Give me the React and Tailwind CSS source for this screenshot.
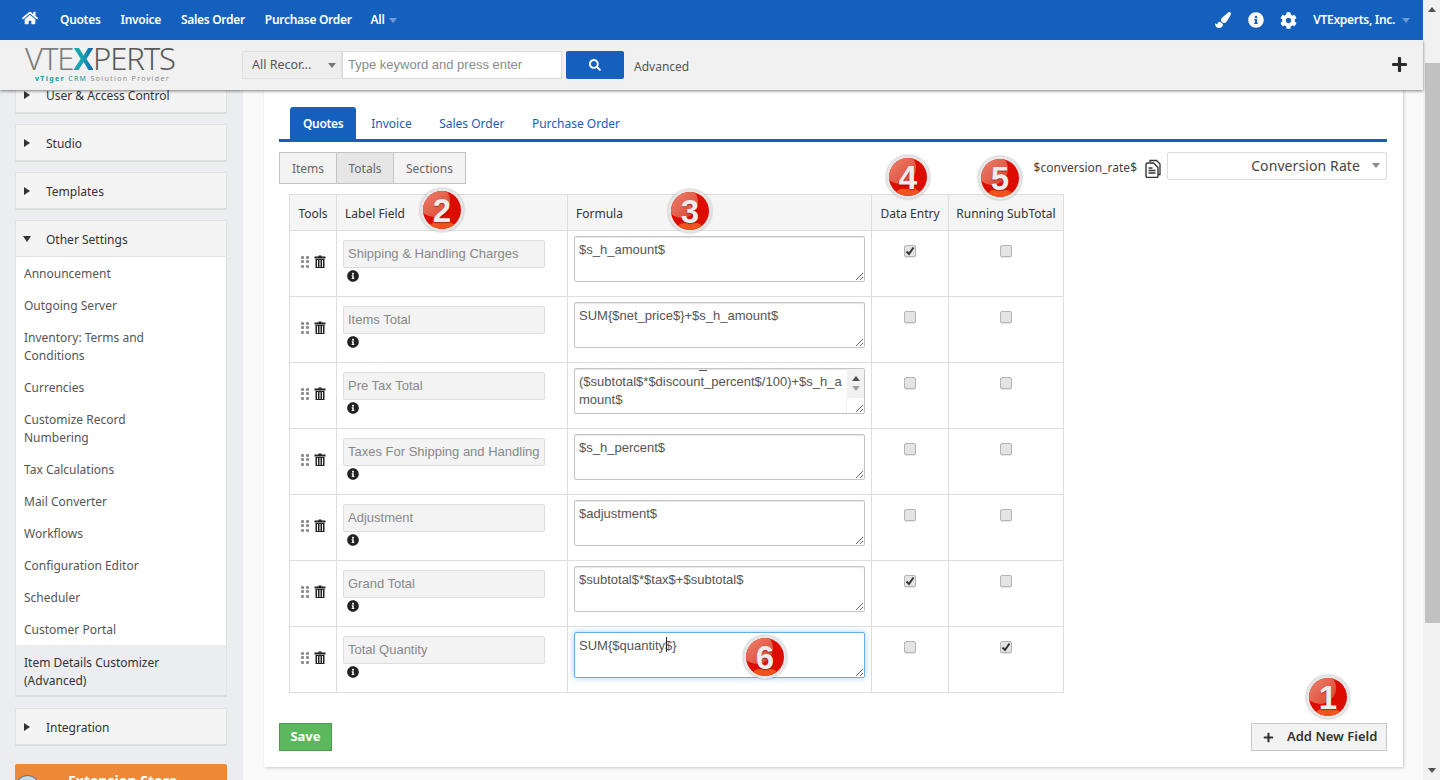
import { FaHome, FaPaintBrush, FaInfoCircle, FaCog, FaSearch, FaPlus } from "react-icons/fa";

const topLinks = ["Quotes", "Invoice", "Sales Order", "Purchase Order"];
const tabs = ["Quotes", "Invoice", "Sales Order", "Purchase Order"];

const rows = [
  { label: "Shipping & Handling Charges", formula: "$s_h_amount$", entry: true, running: false },
  { label: "Items Total", formula: "SUM{$net_price$}+$s_h_amount$", entry: false, running: false },
  { label: "Pre Tax Total", formula: "($subtotal$*$discount_percent$/100)+$s_h_amount$", entry: false, running: false, scroll: true },
  { label: "Taxes For Shipping and Handling", formula: "$s_h_percent$", entry: false, running: false },
  { label: "Adjustment", formula: "$adjustment$", entry: false, running: false },
  { label: "Grand Total", formula: "$subtotal$*$tax$+$subtotal$", entry: true, running: false },
  { label: "Total Quantity", formula: "SUM{$quantity$}", entry: false, running: true, focus: true },
];

// menu items under Other Settings
const settings = [
  "Announcement",
  "Outgoing Server",
  "Inventory: Terms and Conditions",
  "Currencies",
  "Customize Record Numbering",
  "Tax Calculations",
  "Mail Converter",
  "Workflows",
  "Configuration Editor",
  "Scheduler",
  "Customer Portal",
];

const badges = [
  { n: "1", pos: "left-[1306px] top-[675px]" },
  { n: "2", pos: "left-[420px] top-[188px]" },
  { n: "3", pos: "left-[668px] top-[189px]" },
  { n: "4", pos: "left-[886px] top-[155px]" },
  { n: "5", pos: "left-[978px] top-[156px]" },
  { n: "6", pos: "left-[743px] top-[635px]" },
];

const Caret = ({ className }) => (
  <span className={`inline-block w-0 h-0 border-x-[4px] border-x-transparent border-t-[5px] ${className}`}></span>
);

const Side = ({ className }) => (
  <span className={`inline-block w-0 h-0 border-y-[4px] border-y-transparent border-l-[6px] border-l-[#333] ${className}`}></span>
);

const Panel = ({ title }) => (
  <div className="h-[38px] bg-[#f4f4f4] border border-[#e2e2e2] border-b-[2px] border-b-[#dcdcdc] flex items-center pl-[8px]">
    <Side />
    <span className="ml-[16px] mt-[2px] text-[12px] text-[#333]">{title}</span>
  </div>
);

const Badge = ({ n, pos }) => (
  <div className={`absolute ${pos} z-20 w-[44px] h-[44px] rounded-full p-[3px] bg-[#e6e6e6] shadow-[0_0_2px_rgba(0,0,0,0.35)]`}>
    <div className="relative w-full h-full rounded-full overflow-hidden bg-[#dc0d00] flex items-center justify-center">
      <div className="absolute -left-[5px] -top-[6px] w-[32px] h-[32px] rounded-full bg-linear-to-br from-[#ec8f7c] to-[#dc3a28]"></div>
      <div className="absolute left-[6px] right-[6px] -bottom-[7px] h-[14px] rounded-full bg-[#f0541e]"></div>
      <span className="relative font-[Arial,sans-serif] font-bold text-[33px] leading-none text-[#ececec] [text-shadow:0_1px_1px_rgba(90,0,0,0.5)]">{n}</span>
    </div>
  </div>
);

const Check = ({ on }) => (
  <span className="relative inline-block w-[12px] h-[12px] rounded-[2px] border border-[#b5b5b5] bg-[#e4e4e4] shadow-[0_1px_1px_rgba(0,0,0,0.1)]">
    {on && (
      <svg viewBox="0 0 12 12" className="absolute -left-px -top-px w-[12px] h-[12px]">
        <path d="M2.5 6.5 L5 9 L9.5 2.5" fill="none" stroke="#333" strokeWidth="2" />
      </svg>
    )}
  </span>
);

const Grip = () => (
  <span className="grid grid-cols-2 gap-x-[2px] gap-y-[1.5px] w-[8px]">
    {[0, 1, 2, 3, 4, 5].map((i) => (
      <span key={i} className="w-[3px] h-[3px] rounded-[1px] bg-[#8c8c8c]"></span>
    ))}
  </span>
);

const Trash = () => (
  <svg viewBox="0 0 12 13" className="w-[12px] h-[13px]">
    <path d="M4.5 0.5h3v1h4v2H0.5v-2h4z" fill="#222" />
    <path d="M1.5 4h9v9h-9z" fill="#222" />
    <path d="M3.5 5v7M6 5v7M8.5 5v7" stroke="#fff" strokeWidth="1" />
  </svg>
);

const DocIcon = () => (
  <svg viewBox="0 0 16 19" className="w-[16px] h-[19px]">
    <path d="M5 3V1.5h6.5L15 5v10.5h-2" fill="none" stroke="#333" strokeWidth="1.3" />
    <path d="M1 5.5a1.500 1.500 0 0 1 1.500-1.500h6L13 8.500v8.500a1.500 1.500 0 0 1-1.500 1.500h-9A1.500 1.500 0 0 1 1 17z" fill="#fff" stroke="#333" strokeWidth="1.4" />
    <path d="M3.500 9h4M3.500 11.500h7M3.500 14h7" stroke="#333" strokeWidth="1.4" />
  </svg>
);

const Formula = ({ row }) => (
  <div className="relative w-[291px] h-[46px]">
    <textarea
      readOnly
      value={row.formula}
      className={`block w-full h-full resize-y font-[Arial,sans-serif] text-[13px] leading-[18px] text-[#555] pl-[4px] pt-[4px] overflow-hidden rounded-[2px] outline-none border ${
        row.focus
          ? "border-[#66afe9] shadow-[0_0_6px_rgba(102,175,233,0.6)]"
          : "border-[#c4c4c4] shadow-[inset_0_1px_1px_rgba(0,0,0,0.1)]"
      } ${row.scroll ? "pr-[20px] break-all" : "pr-[5px]"}`}
    ></textarea>
    {row.scroll && (
      <>
        <span className="absolute left-[125px] top-[2px] w-[8px] h-px bg-[#555]"></span>
        <div className="absolute right-px top-px w-[17px] h-[28px] bg-[#f1f1f1] flex flex-col items-center justify-center gap-[5px]">
          <span className="w-0 h-0 border-x-[4px] border-x-transparent border-b-[5px] border-b-[#505050]"></span>
          <Caret className="border-t-[#a3a3a3]" />
        </div>
        <div className="absolute right-[18px] bottom-px w-px h-[16px] bg-[#eee]"></div>
        <div className="absolute right-[1px] top-[29px] w-[17px] h-px bg-[#eee]"></div>
      </>
    )}
    {row.focus && <span className="absolute left-[92px] top-[5px] w-px h-[15px] bg-[#222]"></span>}
  </div>
);

const App = () => {
  return (
    <div className="relative w-[1440px] h-[780px] overflow-hidden flex font-['Open_Sans',sans-serif]">
      <div className="w-[1423px] h-full flex flex-col">
        {/* top bar */}
        <div className="h-[40px] shrink-0 bg-[#1560bd] flex items-center pl-[22px] pr-[13px] text-white text-[12px] tracking-[-0.3px] font-semibold z-20">
          <FaHome className="w-[16px] h-[16px] -mt-[5px] mr-[22px]" />
          <div className="flex items-center gap-5">
            {topLinks.map((l) => (
              <span key={l}>{l}</span>
            ))}
            <span className="flex items-center gap-[4px] -ml-px">
              All <Caret className="border-t-[#6f9bd6]" />
            </span>
          </div>
          <div className="ml-auto flex items-center">
            <FaPaintBrush className="w-[16px] h-[16px] mr-[17px]" />
            <FaInfoCircle className="w-[16px] h-[16px] mr-[16px]" />
            <FaCog className="w-[17px] h-[17px] mr-[16px]" />
            <span>VTExperts, Inc.</span>
            <Caret className="border-t-[#6f9bd6] ml-[7px]" />
          </div>
        </div>

        {/* search bar */}
        <div className="relative h-[50px] shrink-0 bg-[#f1f1f1] shadow-[0_1px_3px_rgba(0,0,0,0.5)] z-10 flex items-center pl-[25px] pr-[15px]">
          <div className="w-[151px] -mt-[1px]">
            <div className="h-[25px] leading-[25px] text-[31px] font-light tracking-[-1.1px] text-[#7d7d7d] whitespace-nowrap">
              VTE<span className="font-bold bg-linear-to-r from-[#10b0b0] via-[#18a0b0] to-[#1565b5] bg-clip-text text-transparent">X</span>
              <span className="text-[#5a5a5a]">PERTS</span>
            </div>
            <div className="mt-[3px] ml-[10px] text-[7px] leading-[10px] tracking-[1.35px] text-[#8a8a8a] whitespace-nowrap">
              <span className="text-[#16999f] font-bold">vTiger</span> <span className="text-[#16999f]">CRM</span> Solution Provider
            </div>
          </div>
          <div className="ml-[66px] flex items-center">
            <div className="w-[100px] h-[28px] bg-[#eee] border border-[#e0e0e0] flex items-center pl-[9px] text-[12.5px] text-[#555]">
              All Recor...
              <Caret className="border-t-[#777] ml-auto mr-[5px]" />
            </div>
            <input
              readOnly
              placeholder="Type keyword and press enter"
              className="w-[220px] h-[28px] bg-white border border-[#d9d9d9] px-[5px] pb-[2px] font-[Arial,sans-serif] text-[13px] placeholder:text-[#8a8a8a] outline-none"
            />
            <div className="ml-[4px] w-[58px] h-[28px] rounded-[2px] bg-[#1560bd] flex items-center justify-center text-white">
              <FaSearch className="w-[12px] h-[12px]" />
            </div>
            <span className="ml-[10px] text-[12px] text-[#555] mt-[3px]">Advanced</span>
          </div>
          <FaPlus className="ml-auto w-[17px] h-[17px] text-[#2b2b2b] -mt-[2px]" />
        </div>

        <div className="flex-1 min-h-0 flex bg-[#fafafa]">
          {/* sidebar */}
          <aside className="w-[243px] shrink-0 bg-[#ecedf1] overflow-hidden pl-[15px] pr-[16px]">
            <div className="-mt-[14px] flex flex-col gap-[10px]">
              <Panel title="User & Access Control" />
              <Panel title="Studio" />
              <Panel title="Templates" />
              <div className="bg-white border border-[#e2e2e2] border-b-[2px] border-b-[#dcdcdc]">
                <div className="h-[36px] bg-[#f4f4f4] border-b border-[#e2e2e2] flex items-center pl-[7px]">
                  <Caret className="!border-t-[6px] border-t-[#333]" />
                  <span className="ml-[15px] mt-[2px] text-[12px] text-[#333]">Other Settings</span>
                </div>
                {settings.map((s) => (
                  <div key={s} className="px-[8px] pt-[8px] pb-[6px] text-[12px] leading-[18px] text-[#555] w-[170px]">
                    {s}
                  </div>
                ))}
                <div className="px-[8px] pt-[9px] pb-[5px] text-[12px] leading-[18px] text-[#333] bg-[#ecedf1]">
                  Item Details Customizer (Advanced)
                </div>
              </div>
              <div className="mt-px">
                <Panel title="Integration" />
              </div>
              <div className="mt-[8px] h-[60px] rounded-t-[2px] bg-[#ee8a37] relative pl-[53px] pt-[8px] text-[14px] leading-[18px] font-bold text-white">
                <span className="absolute left-0 top-[11px] w-[25px] h-[25px] rounded-full border border-[#4a6d8c] bg-[#cfd8de]"></span>
                Extension Store
              </div>
            </div>
          </aside>

          {/* content */}
          <main className="flex-1 min-w-0 pl-[21px] pr-[20px]">
            <div className="h-[677px] bg-white shadow-[1px_1px_3px_rgba(0,0,0,0.2)] pl-[15px] pr-[16px] pt-[17px]">
              <div className="flex items-end h-[35px] border-b-[3px] border-[#1560bd] pl-[11px] text-[12px] text-[#1560bd]">
                {tabs.map((t, i) => (
                  <span
                    key={t}
                    className={`h-[32px] pt-[2px] flex items-center px-[13px] ${i === 0 ? "mr-[2px] bg-[#1560bd] text-white rounded-t-[3px] font-semibold tracking-[-0.35px]" : "mr-[1.5px]"}`}
                  >
                    {t}
                  </span>
                ))}
              </div>

              <div className="mt-[10px] flex justify-between h-[32px]">
                <div className="flex border border-[#c4c4c4] text-[12px] text-[#666] bg-[#f3f3f3] self-start h-[32px]">
                  <span className="w-[56px] pt-px flex items-center justify-center">Items</span>
                  <span className="w-[58px] pt-px flex items-center justify-center bg-[#e6e6e6] border-x border-[#c4c4c4]">Totals</span>
                  <span className="w-[71px] pt-px flex items-center justify-center">Sections</span>
                </div>
                <div className="flex items-start text-[12px] text-[#444]">
                  <span className="mt-[7px]">$conversion_rate$</span>
                  <span className="ml-[8px] mt-[7px]">
                    <DocIcon />
                  </span>
                  <div className="ml-[6px] w-[220px] h-[28px] pb-[2px] border border-[#ddd] rounded-[2px] flex items-center justify-end pr-[6px] text-[14px] tracking-[0.1px] text-[#444]">
                    Conversion Rate
                    <Caret className="border-t-[#888] ml-[12px]" />
                  </div>
                </div>
              </div>

              <table className="mt-[10px] ml-[10px] w-[774px] table-fixed border-collapse text-[12px] text-[#333]">
                <colgroup>
                  <col className="w-[47px]" />
                  <col className="w-[231px]" />
                  <col className="w-[304px]" />
                  <col className="w-[77px]" />
                  <col className="w-[115px]" />
                </colgroup>
                <thead>
                  <tr className="h-[36px] bg-[#f5f5f5]">
                    <th className="border border-[#ddd] pt-[2px] font-normal">Tools</th>
                    <th className="border border-[#ddd] pt-[2px] font-normal text-left pl-[8px]">Label Field</th>
                    <th className="border border-[#ddd] pt-[2px] font-normal text-left pl-[8px]">Formula</th>
                    <th className="border border-[#ddd] pt-[2px] font-normal">Data Entry</th>
                    <th className="border border-[#ddd] pt-[2px] font-normal">Running SubTotal</th>
                  </tr>
                </thead>
                <tbody>
                  {rows.map((r) => (
                    <tr key={r.label} className="h-[66px]">
                      <td className="border border-[#ddd] align-top">
                        <div className="flex items-center justify-center gap-[5px] mt-[24px]">
                          <Grip />
                          <Trash />
                        </div>
                      </td>
                      <td className="border border-[#ddd] align-top pl-[6px]">
                        <div className="mt-[9px] w-[202px] h-[28px] bg-[#f3f3f3] border border-[#ddd] rounded-[2px] px-[4px] flex items-center font-[Liberation_Sans,sans-serif] text-[13px] text-[#888] whitespace-nowrap overflow-hidden">
                          {r.label}
                        </div>
                        <FaInfoCircle className="mt-[2px] ml-[4px] w-[12px] h-[12px] text-[#222]" />
                      </td>
                      <td className="border border-[#ddd] align-top pl-[6px]">
                        <div className="mt-[5px]">
                          <Formula row={r} />
                        </div>
                      </td>
                      <td className="border border-[#ddd] align-top text-center">
                        <div className="mt-[14px] leading-none">
                          <Check on={r.entry} />
                        </div>
                      </td>
                      <td className="border border-[#ddd] align-top text-center">
                        <div className="mt-[14px] leading-none">
                          <Check on={r.running} />
                        </div>
                      </td>
                    </tr>
                  ))}
                </tbody>
              </table>

              <div className="mt-[30px] flex justify-between">
                <button className="w-[53px] h-[28px] bg-[#5cb85c] border border-[#4a9c4a] text-white text-[13px] font-bold">
                  Save
                </button>
                <button className="w-[136px] h-[28px] bg-[#f3f3f3] border border-[#c8c8c8] flex items-center pl-[11px] text-[13px] font-semibold text-[#333]">
                  <FaPlus className="w-[11px] h-[11px] mr-[13px]" />
                  Add New Field
                </button>
              </div>
            </div>
          </main>
        </div>
      </div>

      {/* page scrollbar */}
      <div className="w-[17px] h-full bg-[#f1f1f1] flex flex-col items-center">
        <span className="mt-[7px] w-0 h-0 border-x-[4px] border-x-transparent border-b-[5px] border-b-[#505050]"></span>
        <div className="mt-[51px] ml-[1px] w-[15px] h-[560px] bg-[#c1c1c1]"></div>
        <Caret className="mt-auto mb-[7px] border-t-[#505050]" />
      </div>

      {badges.map((b) => (
        <Badge key={b.n} n={b.n} pos={b.pos} />
      ))}
    </div>
  );
};

export default App;
